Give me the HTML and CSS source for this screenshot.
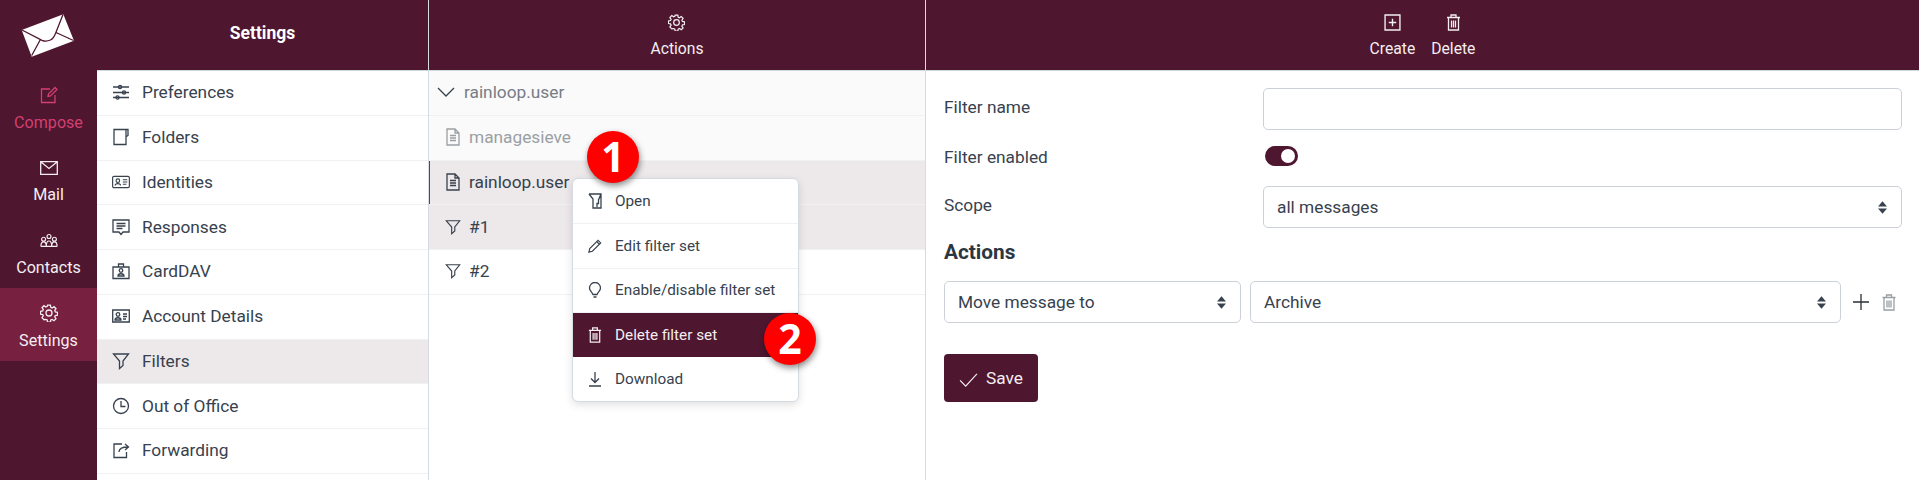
FILE: index.html
```html
<!DOCTYPE html>
<html lang="en">
<head>
<meta charset="utf-8">
<title>Settings</title>
<link rel="stylesheet" href="styles.css">
</head>
<body>
<svg class="sprites" width="0" height="0" aria-hidden="true">
  <defs>
    <symbol id="i-gear" viewBox="0 0 18 18"><path d="M7.600 1.200h2.800l.4 2.200 1.300.6 1.900-1.300 2 2-1.300 1.900.6 1.300 2.200.4v2.800l-2.200.4-.6 1.300 1.300 1.900-2 2-1.900-1.300-1.300.6-.4 2.200H7.600l-.4-2.200-1.300-.6L4 15.700l-2-2 1.300-1.900-.6-1.300-2.200-.4V7.300l2.200-.4.6-1.300L2 3.700l2-2 1.900 1.300 1.300-.6z"/><circle cx="9" cy="9" r="3"/></symbol>
    <symbol id="i-file" viewBox="1 0 14 18"><path d="M2 1h8l4 4v12H2zM10 1v4h4M5 7.500h6M5 10h6M5 12.500h6"/></symbol>
    <symbol id="i-filter" viewBox="0 0 18 18"><path d="M1.500 2h15L11 9v4.500l-3.500 3V9z"/></symbol>
    <symbol id="i-trash" viewBox="1 .5 14 17"><path d="M1.500 4h13M5.500 4V1.500h5V4M3 4v12.500h10V4M6 7v7M8 7v7M10 7v7"/></symbol>
  </defs>
</svg>
<div class="app">
  <nav class="rail">
    <div class="logo">
      <svg width="97" height="70" viewBox="0 0 97 70"><path class="env" d="M21.700 30 63.300 14.300 74 40.700 31.700 56.700z"/><path class="env-line" d="M22 30l20 10.300q4 1.700 8.500-.3 2.800-1.200 5-6.500l7.500-19M31.700 55.500l9-16.500M73.500 40.500 56 32.500"/></svg>
    </div>
    <a class="rail-item compose">
      <svg class="rail-icon" viewBox="0 0 18 18"><path d="M10 3H1.500v13.500H15V9M8 10.500 8.500 8 15 1.500 17 3.500 10.500 10z"/></svg>
      <span>Compose</span>
    </a>
    <a class="rail-item">
      <svg class="rail-icon" viewBox="0 0 18 14"><path d="M.7.7h16.600v12.600H.7zM1 1l8 6.500L17 1"/></svg>
      <span>Mail</span>
    </a>
    <a class="rail-item">
      <svg class="rail-icon" viewBox="0 0 20 18"><circle cx="10" cy="4" r="2.200"/><circle cx="4" cy="7" r="2.200"/><circle cx="16" cy="7" r="2.200"/><path d="M1 15c0-3 1-5 3-5s3 2 3 5M7 15c0-3 1-6 3-6s3 3 3 6M13 15c0-3 1-5 3-5s3 2 3 5M1 15h18"/></svg>
      <span>Contacts</span>
    </a>
    <a class="rail-item active">
      <svg class="rail-icon"><use href="#i-gear"/></svg>
      <span>Settings</span>
    </a>
  </nav>

  <section class="pane pane-menu">
    <header class="bar"><h1>Settings</h1></header>
    <ul class="list">
      <li class="row"><svg class="ico" viewBox="0 0 18 18"><path d="M1 4h16M1 9.500h16M1 14.500h16"/><circle class="fill" cx="8" cy="4" r="1.600"/><circle class="fill" cx="12" cy="9.500" r="1.600"/><circle class="fill" cx="5.500" cy="14.500" r="1.600"/></svg>Preferences</li>
      <li class="row"><svg class="ico" viewBox="0 0 18 18"><path d="M2 1.500h12v15H2zM14.500 1.500h1.500v6l-1.500 1"/></svg>Folders</li>
      <li class="row"><svg class="ico" viewBox="0 0 20 16"><rect x=".7" y="1.700" width="18.600" height="12.600" rx="1.500"/><circle cx="6.500" cy="6.500" r="2"/><path d="M3.500 12c0-3 6-3 6 0M12 5.500h5M12 8h5M12 10.500h4"/></svg>Identities</li>
      <li class="row"><svg class="ico" viewBox="0 0 18 18"><path d="M1 2h16v12h-6l-2 2.500L7 14H1zM4.500 5.500h9M4.500 8h9M4.500 10.500h6"/></svg>Responses</li>
      <li class="row"><svg class="ico" viewBox="0 0 18 18"><path d="M1 5h16v11.500H1zM6.500 5V2h5v3"/><circle cx="9" cy="8.500" r="1.800"/><path d="M6 14c0-3 6-3 6 0z"/></svg>CardDAV</li>
      <li class="row"><svg class="ico" viewBox="0 0 18 16"><path d="M.7 2h16.600v12H.7z"/><circle cx="6" cy="6.500" r="1.800"/><path d="M3 12c0-3 6-3 6 0zM11 6h4M11 8.500h4M11 11h3"/></svg>Account Details</li>
      <li class="row selected"><svg class="ico"><use href="#i-filter"/></svg>Filters</li>
      <li class="row"><svg class="ico" viewBox="0 0 18 18"><circle cx="9" cy="9" r="7.500"/><path d="M9 4v5.500h4.500"/></svg>Out of Office</li>
      <li class="row"><svg class="ico" viewBox="0 0 18 18"><path d="M14.500 11v5.500H2V3h8M7 11c0-3 3-5 9-5M13 3l3.500 3L13 9"/></svg>Forwarding</li>
    </ul>
  </section>

  <section class="pane pane-sets">
    <header class="bar">
      <div class="tool"><svg class="tool-icon"><use href="#i-gear"/></svg><span>Actions</span></div>
    </header>
    <ul class="list">
      <li class="row row-tight muted-row"><svg class="chev" viewBox="0 0 18 10"><path d="M1 1l8 8 8-8"/></svg><span class="muted">rainloop.user</span></li>
      <li class="row row-tight muted-row disabled"><svg class="ico-s"><use href="#i-file"/></svg>managesieve</li>
      <li class="row row-tight selected current"><svg class="ico-s"><use href="#i-file"/></svg>rainloop.user</li>
      <li class="row row-tight selected"><svg class="ico-s"><use href="#i-filter"/></svg>#1</li>
      <li class="row row-tight"><svg class="ico-s"><use href="#i-filter"/></svg>#2</li>
    </ul>
  </section>

  <section class="pane pane-detail">
    <header class="bar bar-tools">
      <div class="tool"><svg class="tool-icon" viewBox="0 0 16 16"><path d="M1 1h14v14H1zM8 4.500v7M4.500 8h7"/></svg><span>Create</span></div>
      <div class="tool"><svg class="tool-icon"><use href="#i-trash"/></svg><span>Delete</span></div>
    </header>
    <form class="form">
      <div class="field"><label>Filter name</label><input class="input" type="text"></div>
      <div class="field field-toggle"><label>Filter enabled</label><span class="toggle"><span class="knob"></span></span></div>
      <div class="field"><label>Scope</label>
        <div class="select input"><span>all messages</span><svg class="updown" viewBox="0 0 10 14"><path d="M5 0l5 6H0zM5 14l5-6H0z"/></svg></div>
      </div>
      <h2>Actions</h2>
      <div class="action-row">
        <div class="select sel-a"><span>Move message to</span><svg class="updown" viewBox="0 0 10 14"><path d="M5 0l5 6H0zM5 14l5-6H0z"/></svg></div>
        <div class="select sel-b"><span>Archive</span><svg class="updown" viewBox="0 0 10 14"><path d="M5 0l5 6H0zM5 14l5-6H0z"/></svg></div>
        <svg class="plus" viewBox="0 0 16 16"><path d="M8 0v16M0 8h16"/></svg>
        <svg class="trash-g"><use href="#i-trash"/></svg>
      </div>
      <button class="save" type="button"><svg class="check" viewBox="0 0 20 16"><path d="M1 9l6 6L19 2"/></svg>Save</button>
    </form>
  </section>

  <ul class="menu">
    <li><svg class="m-ico" viewBox="0 0 14 16"><path d="M1 1h12v14H5V6L1 1M13 1 10.500 7v3.500H9V14"/></svg>Open</li>
    <li><svg class="m-ico" viewBox="0 0 16 16"><path d="M1 15l1-4L11.500 1.500 14.500 4.500 5 14zM10 3l3 3"/></svg>Edit filter set</li>
    <li><svg class="m-ico" viewBox="0 0 14 16"><path d="M5 12.500C4 9.500 1.500 9 1.500 6a5.500 5.500 0 0 1 11 0c0 3-2.500 3.500-3.500 6.500zM5.500 15h3"/></svg>Enable/disable filter set</li>
    <li class="hot"><svg class="m-ico"><use href="#i-trash"/></svg>Delete filter set</li>
    <li><svg class="m-ico" viewBox="0 0 14 16"><path d="M7 1v10M3 7.500l4 4 4-4M1 15h12"/></svg>Download</li>
  </ul>
  <div class="badge badge-1">1</div>
  <div class="badge badge-2">2</div>
</div>
</body>
</html>
```
FILE: styles.css
```css
* { box-sizing: border-box; }
html, body { margin: 0; height: 100%; overflow: hidden; }
body { font-family: Roboto, "Liberation Sans", sans-serif; font-size: 17.300px; color: #37424e; background: #fff; }
.sprites { position: absolute; }
ul { list-style: none; margin: 0; padding: 0; }
svg { fill: none; stroke: currentColor; stroke-width: 1.3; flex: none; display: block; }
.app { position: relative; display: flex; height: 480px; }

.rail { width: 97px; flex: none; background: #4e162f; color: #f4eef1; display: flex; flex-direction: column; }
.logo { height: 70px; }
.env { fill: #fff; stroke: none; }
.env-line { stroke: #4e162f; stroke-width: 1.3; }
.rail-item { height: 72.800px; display: flex; flex-direction: column; align-items: center; padding-top: 16px; gap: 9.500px; font-size: 16.100px; line-height: 18px; }
.rail-icon { width: 18px; height: 18px; }
.rail-item.compose { color: #d2406f; }
.rail-item.active { background: #772040; }

.pane { display: flex; flex-direction: column; }
.pane-menu { width: 332px; flex: none; border-right: 1px solid #d5dbdf; }
.pane-sets { width: 497px; flex: none; border-right: 1px solid #d5dbdf; }
.pane-detail { flex: 1; min-width: 0; }
.bar { height: 71px; flex: none; background: #4e162f; border-bottom: 1px solid #cfd8dc; color: #f4eef1; display: flex; justify-content: center; }
.bar h1 { margin: 0; font-size: 17.500px; font-weight: 700; line-height: 67px; color: #fff; }
.bar-tools { gap: 16px; }
.tool { display: flex; flex-direction: column; align-items: center; padding-top: 14px; gap: 9px; font-size: 15.700px; line-height: 18px; }
.tool-icon { width: 17px; height: 17px; }

.list { flex: 1; }
.row { height: 44.750px; display: flex; align-items: center; border-bottom: 1px solid #f0f1f3; padding: 0 0 1px 15px; gap: 12px; }
.row .ico { width: 18px; height: 18px; }
.row.selected { background: #ede8ea; }
.row-tight { padding-left: 16px; gap: 8px; }
.ico-s { width: 16px; height: 18px; }
.muted-row { background: #fafafa; }
.muted { color: #767d85; }
.disabled { color: #9a9fa4; }
.chev { width: 18px; height: 10px; margin-left: -8px; margin-right: 1px; color: #37424e; }
.current { box-shadow: inset 1px 0 0 #8e2a55; }

.form { padding: 17px 17px 0 18px; }
.field { display: flex; align-items: center; justify-content: space-between; height: 42px; }
.field-toggle { height: 20px; margin: 16px 0 20px; }
.field label { flex: none; padding-bottom: 4px; }
.field-toggle label { padding-bottom: 0; padding-top: 2px; }
.input { width: 639px; height: 42px; border: 1px solid #ccd1d9; border-radius: 5px; background: #fff; }
.toggle { width: 637px; height: 20px; display: block; }
.toggle .knob { display: flex; justify-content: flex-end; align-items: center; width: 33px; height: 20px; border-radius: 10px; background: #4e162f; padding-right: 3px; }
.toggle .knob::after { content: ""; width: 14px; height: 14px; border-radius: 50%; background: #fff; }
.select { display: flex; align-items: center; justify-content: space-between; height: 42px; border: 1px solid #ccd1d9; border-radius: 5px; padding: 0 14px 0 13px; background: #fff; }
.select span { padding-bottom: 1px; }
.updown { width: 9px; height: 13px; fill: #37424e; stroke: none; }
h2 { margin: 12px 0 17px; font-size: 20.800px; line-height: 24px; font-weight: 700; color: #2c3640; }
.action-row { display: flex; align-items: center; }
.sel-a { width: 297px; margin-right: 9px; }
.sel-b { width: 591px; }
.plus { width: 16px; height: 16px; color: #2a2f35; margin-left: 12px; }
.trash-g { width: 14px; height: 17px; color: #9a9ea2; margin-left: 13px; }
.save { margin-top: 31px; height: 48px; width: 94px; border: 0; border-radius: 4px; background: #4e162f; color: #f4eef1; font: inherit; display: flex; align-items: center; gap: 8px; padding: 0 0 0 15px; }
.check { width: 19px; height: 15px; margin-top: 3px; }

.menu { position: absolute; left: 572px; top: 178px; width: 227px; height: 224px; background: #fff; border: 1px solid #d5dbdf; border-radius: 6px; box-shadow: 0 3px 8px rgba(0,0,0,.12); overflow: hidden; font-size: 15.300px; }
.menu li { height: 44.800px; display: flex; align-items: center; gap: 13px; padding-left: 15px; border-bottom: 1px solid #f0f1f3; }
.menu li:last-child { border-bottom: 0; height: 44px; }
.menu .hot { background: #4e162f; color: #f4eef1; border-bottom: 0; height: 44px; }
.m-ico { width: 14px; height: 16px; }

.badge { position: absolute; width: 52px; height: 52px; border-radius: 50%; background: #f00; color: #fff; font: 700 41px/50px "Open Sans", sans-serif; text-align: center; box-shadow: 1px 3px 6px rgba(0,0,0,.45); }
.badge-1 { left: 587px; top: 131px; }
.badge-2 { left: 764px; top: 313px; }
```
